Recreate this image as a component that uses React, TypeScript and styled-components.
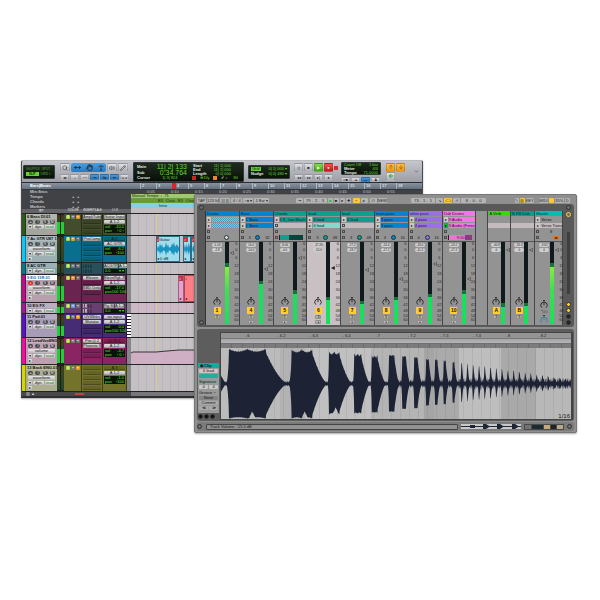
import React from "react";
import styled, { createGlobalStyle, css } from "styled-components";
import { Search, MoveHorizontal, Hand, Type, Volume2, Pencil, ArrowUp, ArrowDown, ArrowLeft, ChevronDown } from "lucide-react";

const Global = createGlobalStyle`
  *, *::before, *::after { box-sizing: border-box; }
  body { margin: 0; background: #fff; font: 4px/5px "Liberation Sans", Arial, sans-serif; color: #161616; }
  button, input { font: inherit; color: inherit; padding: 0; margin: 0; border: 0; }
  i { font-style: normal; }
  svg { display: block; flex: none; }
`;

const Desktop = styled.main`
  position: relative;
  min-height: 100vh;
  overflow: hidden;
`;

/* ---------- Editor window ---------- */

const EditWindow = styled.section`
  position: absolute;
  left: 21px;
  top: 160px;
  width: 67%;
  background: #3b3b3d;
  border: 1px solid #4a4a4c;
  border-top-color: #b9bac0;
  border-bottom: 2px solid #2f2f31;
  border-radius: 2px 2px 0 0;
  overflow: hidden;
  box-shadow: 0 1px 2px rgba(0, 0, 0, 0.35);
`;

const Toolbar = styled.header`
  display: grid;
  grid-template-columns: 37px 73px 115px 46px 47px 45px 28px 1fr;
  align-items: center;
  height: 22px;
  padding-left: 1px;
  background: linear-gradient(#c6c7cd, #9c9ea6);
  border-bottom: 1px solid #2a2c30;
`;

const Lcd = styled.div<{ $h: number; $w: number }>`
  display: flex;
  flex-direction: column;
  justify-content: space-evenly;
  height: ${(p) => p.$h}px;
  width: ${(p) => p.$w}px;
  padding: 0 2px;
  background: linear-gradient(#1d291d, #081208);
  border: 1px solid #35393a;
  border-radius: 1px;
  color: #5fd32c;
  white-space: nowrap;
`;

const LcdLine = styled.div<{ $big?: boolean }>`
  display: flex;
  justify-content: space-between;
  align-items: center;
  font-size: ${(p) => (p.$big ? 7 : 4)}px;
  line-height: ${(p) => (p.$big ? 6 : 4)}px;
  color: #62d82e;
  white-space: nowrap;
  b { color: #e6eee4; font-size: 4px; }
`;

const LcdMode = styled.button<{ $on?: boolean }>`
  width: 13px;
  height: 4px;
  font-size: 3px;
  line-height: 4px;
  font-weight: bold;
  background: ${(p) => (p.$on ? "#63d22d" : "transparent")};
  color: ${(p) => (p.$on ? "#10250a" : "#437b28")};
`;

const Mark = styled.em<{ $on?: boolean }>`
  font-style: normal;
  padding: 0 1px;
  background: ${(p) => (p.$on ? "#63d22d" : "transparent")};
  color: #10250a;
`;

const Counter = styled.div`
  display: grid;
  grid-template-columns: 50px 38px;
  justify-content: start;
  gap: 0 6px;
  width: 111px;
  height: 20px;
  padding: 1px 3px;
  background: linear-gradient(#202b20, #071007);
  border: 1px solid #33373a;
  border-radius: 1px;
`;

const CounterFoot = styled.div`
  grid-column: 1 / -1;
  display: flex;
  gap: 4px;
  align-items: center;
  line-height: 4px;
  color: #62d82e;
  white-space: nowrap;
  b { color: #e6eee4; }
  span:first-of-type { margin: 0 10px 0 8px; }
`;

const Chip = styled.i<{ $c: string }>`
  flex: none;
  width: 4px;
  height: 4px;
  background: ${(p) => p.$c};
`;

const Stack = styled.div`
  display: flex;
  flex-direction: column;
  gap: 2px;
`;

const Tight = styled.div`
  display: flex;
  flex-direction: column;
  gap: 0;
`;

const Row = styled.div<{ $gap?: number }>`
  display: flex;
  align-items: center;
  gap: ${(p) => p.$gap ?? 1}px;
`;

const ToolGroup = styled.div`
  display: flex;
  border-radius: 2px;
  background: linear-gradient(#4a9fe0, #2379c4);
  button { background: transparent; border: 0; }
`;

const toolTone = {
  grey: css`background: linear-gradient(#e0e1e4, #aeafb4); color: #2c2c30;`,
  blue: css`background: linear-gradient(#4c9cdb, #2272b8); color: #0c2034;`,
  green: css`background: linear-gradient(#86dc4e, #3da01a); color: #e7ffd8;`,
  red: css`background: linear-gradient(#f05656, #c81616); color: #fff;`,
  orange: css`background: linear-gradient(#ffc04a, #ef940c); color: #7a4300;`,
};

const Tool = styled.button<{ $tone?: keyof typeof toolTone; $w?: number; $h?: number }>`
  display: flex;
  align-items: center;
  justify-content: center;
  width: ${(p) => p.$w ?? 9}px;
  height: ${(p) => p.$h ?? 9}px;
  border: 1px solid rgba(60, 62, 68, 0.25);
  border-radius: 1px;
  ${(p) => toolTone[p.$tone ?? "grey"]}
`;

const Ruler = styled.div<{ $main?: boolean }>`
  display: grid;
  grid-template-columns: 109px minmax(0, 1fr);
  height: ${(p) => (p.$main ? 7 : 4)}px;
  line-height: ${(p) => (p.$main ? 6 : 4)}px;
  background: ${(p) => (p.$main ? "linear-gradient(#8893a1, #66707d)" : "#414245")};
  color: ${(p) => (p.$main ? "#fff" : "#c2c4c6")};
  border-bottom: ${(p) => (p.$main ? 1 : 0)}px solid #30363d;
`;

const RulerName = styled.b`
  padding-left: 8px;
`;

const Ticks = styled.div`
  display: grid;
  grid-template-columns: repeat(17, 16px);
  overflow: hidden;
  padding-left: 9px;
`;

const Tick = styled.span<{ $head?: boolean }>`
  border-left: ${(p) => (p.$head ? "4px solid #d8262c" : "1px solid rgba(220, 225, 230, 0.55)")};
  padding-left: 1px;
`;

const SubTicks = styled.div`
  display: grid;
  grid-template-columns: repeat(12, 24px);
  padding-left: 16px;
  overflow: hidden;
`;

const Conductor = styled.div`
  display: grid;
  grid-template-columns: 109px minmax(0, 1fr);
  height: 14px;
`;

const ConductorNames = styled.div`
  display: grid;
  grid-template-columns: 42px 5px 1fr;
  grid-auto-rows: 5px;
  padding-left: 8px;
  color: #c2c4c6;
  font-weight: bold;
  background: #414245;
`;

const Lane = styled.div<{ $c: string; $indent: number; $h: number }>`
  display: flex;
  gap: 3px;
  height: ${(p) => p.$h}px;
  line-height: ${(p) => p.$h}px;
  padding-left: ${(p) => p.$indent}px;
  background: ${(p) => p.$c};
  color: #1c2a12;
  white-space: nowrap;
  overflow: hidden;
`;

const trackGrid = css`
  display: grid;
  grid-template-columns: 4px 31px 7px 18px 21px 24px 4px minmax(0, 1fr);
`;

const ColumnHeads = styled.div`
  ${trackGrid}
  height: 5px;
  line-height: 5px;
  font-size: 3px;
  background: #626468;
  color: #f0f0f0;
  white-space: nowrap;
  text-align: center;
  span:nth-child(8) { background: #c1bdc0; }
`;

const TrackRow = styled.div<{ $h: number; $bg: string }>`
  ${trackGrid}
  height: ${(p) => p.$h}px;
  background: ${(p) => p.$bg};
  border-top: 1px solid #252527;
  overflow: hidden;
`;

const Strip = styled.i<{ $c: string }>`
  background: ${(p) => p.$c};
  border-right: 1px solid rgba(0, 0, 0, 0.35);
`;

const NamePanel = styled.div<{ $tint: string }>`
  display: flex;
  flex-direction: column;
  gap: 1px;
  min-width: 0;
  background: ${(p) => p.$tint};
`;

const TrackName = styled.div<{ $on?: boolean }>`
  padding-left: 1px;
  flex: none;
  height: 5px;
  font-weight: bold;
  white-space: nowrap;
  background: ${(p) => (p.$on ? "#fff" : "rgba(255,255,255,0.18)")};
  color: ${(p) => (p.$on ? "#1263b5" : "#111")};
`;

const Dots = styled.div`
  display: flex;
  justify-content: space-evenly;
  flex: none;
`;

const DotButton = styled.button<{ $rec?: boolean }>`
  width: 5px;
  height: 4px;
  font-size: 3px;
  line-height: 4px;
  border-radius: 2px;
  background: ${(p) => (p.$rec ? "#e02222" : "#47494d")};
  color: #fff;
`;

const Selector = styled.button<{ $wide?: boolean; $green?: boolean }>`
  flex: ${(p) => (p.$wide ? "1" : "none")};
  min-width: 4px;
  height: 4px;
  line-height: 4px;
  border-radius: 1px;
  background: linear-gradient(#e8e8e8, #b9b9b9);
  color: ${(p) => (p.$green ? "#15872a" : "#151515")};
  white-space: nowrap;
`;

const SelectorRow = styled.div`
  display: flex;
  flex: none;
  gap: 1px;
  padding: 0 2px;
`;

const StereoMeter = styled.div<{ $l: number }>`
  display: flex;
  gap: 1px;
  padding: 1px 0;
  background: #1c1d1a;
  &::before, &::after {
    content: "";
    flex: 1;
    background: linear-gradient(to top, #1fd034 ${(p) => p.$l}%, #234529 ${(p) => p.$l}%, #3b431f 80%, #4a3020);
  }
`;

const Comments = styled.div`
  display: flex;
  gap: 1px;
  padding: 1px 1px 0 2px;
  border-right: 1px solid rgba(0, 0, 0, 0.45);
`;

const Flag = styled.button<{ $c: string }>`
  width: 4px;
  height: 4px;
  line-height: 4px;
  border-radius: 1px;
  background: ${(p) => p.$c};
  color: #fff;
  font-weight: bold;
`;

const SlotColumn = styled.div`
  display: flex;
  flex-direction: column;
  gap: 1px;
  min-width: 0;
  padding: 1px;
  border-right: 1px solid rgba(0, 0, 0, 0.45);
`;

const Slot = styled.button<{ $on?: boolean }>`
  flex: none;
  height: 4px;
  line-height: 4px;
  border-radius: 1px;
  white-space: nowrap;
  background: ${(p) => (p.$on ? "linear-gradient(#dedede, #b5b5b5)" : "rgba(0,0,0,0.13)")};
  box-shadow: inset 0 -1px ${(p) => (p.$on ? "rgba(0,0,0,0.15)" : "rgba(0,0,0,0.25)")};
`;

const Readout = styled.output<{ $short?: boolean }>`
  display: flex;
  flex-direction: column;
  justify-content: center;
  height: ${(p) => (p.$short ? 4 : 8)}px;
  padding: 0 1px;
  background: #091306;
  color: #64e038;
  line-height: 4px;
  white-space: nowrap;
  span { display: flex; justify-content: space-between; }
`;

const Gutter = styled.i<{ $keys?: boolean }>`
  background: ${(p) => (p.$keys ? "repeating-linear-gradient(#fff 0 2px, #222 2px 3px)" : "#85868a")};
`;

const Timeline = styled.div<{ $pink?: boolean }>`
  display: flex;
  overflow: hidden;
  background:
    linear-gradient(90deg, transparent 25px, #dcc98a 25px 26px, transparent 26px),
    repeating-linear-gradient(90deg, transparent 0 7px, rgba(90, 80, 90, 0.1) 7px 8px),
    ${(p) => (p.$pink ? "#cdb8c6" : "#c4c0c3")};
`;

const AudioClip = styled.div<{ $c: string; $edge: string; $before: number; $w: number }>`
  margin-left: ${(p) => p.$before}px;
  width: ${(p) => p.$w}px;
  flex: none;
  display: flex;
  flex-direction: column;
  justify-content: space-between;
  background: ${(p) => p.$c};
  border: 1px solid ${(p) => p.$edge};
  overflow: hidden;
  white-space: nowrap;
  b { width: 4px; background: #c93240; color: #fff; }
`;

const EditFooter = styled.footer`
  ${trackGrid}
  height: 5px;
  line-height: 4px;
  background: linear-gradient(90deg, transparent 109px, #77777b 109px), #48484b;
  border-top: 1px solid #222;
  color: #ddd;
  i { width: 9px; height: 2px; margin: 1px 0 0 11px; background: #c3423c; }
`;

type Track = {
  name: string; h: number; strip: string; bg: string; tint: string; level: number;
  view?: string; selected?: boolean; rec?: boolean; inserts: string[]; io: string[]; vol: string; pan: string; short?: boolean;
};

const tracks: Track[] = [
  { name: "6   Bass DI.01", h: 22, strip: "#2f5a1e", bg: "#434c2c", tint: "#a3a69c", level: 62, inserts: ["AmpliTube", "", "", ""], io: ["Guitar Input", "A 1-2"], vol: "-10.0", pan: "‹ 0 ›" },
  { name: "7 Ac GTR U87 1", h: 27, strip: "#12c4f2", bg: "#08708c", tint: "#9fb0b4", level: 0, view: "waveform", inserts: ["ProComp", "", "", "", ""], io: ["A 2", "AC GTR"], vol: "-6.2", pan: "‹100" },
  { name: "8     AC GTR", h: 12, strip: "#0b7686", bg: "#28505b", tint: "#87a0a5", level: 0, inserts: [], io: ["ACGTR", "A 1-2"], vol: "0.0", pan: "", short: true },
  { name: "9   EG 11R.01", h: 28, strip: "#b8108d", bg: "#6a2450", tint: "#b79fae", level: 62, view: "waveform", selected: true, rec: true, inserts: ["Eleven", "", "BBD Delay", ""], io: ["ElevnRgL-R", "A 1-2"], vol: "-17.0", pan: "100 100" },
  { name: "10    EG FX", h: 11, strip: "#a01b96", bg: "#68406f", tint: "#ad9fb4", level: 62, inserts: [], io: ["Rg St", "A 1-2"], vol: "0.0", pan: "", short: true },
  { name: "11    Pad.01", h: 24, strip: "#5a14bd", bg: "#452c74", tint: "#a79cb8", level: 50, inserts: ["UVIWrks", "Mutator", "", ""], io: ["no input", "A 1-2"], vol: "0.0", pan: "100 100" },
  { name: "12 LeadVoxENG", h: 27, strip: "#f00d9f", bg: "#8a2462", tint: "#bd9fb1", level: 57, view: "volume", inserts: ["Pro-Q 2", "Phoenix II", "", ""], io: ["U 78.1", "A 1-2"], vol: "-4.7", pan: "‹ 0 ›" },
  { name: "13 Back ENG.01", h: 27, strip: "#d2d40e", bg: "#74732b", tint: "#aeae90", level: 0, view: "waveform", inserts: ["", "", "", "", ""], io: ["A 3", "A 1-2"], vol: "-1.0", pan: "‹100" },
];

const MiniWave = () => (
  <svg viewBox="0 0 22 12" width="100%" height="14" preserveAspectRatio="none" aria-hidden="true">
    <path d="M0 6 1 3 2 5 3 1 4 4 5 2 6 5 8 4 9 0 10 4 11 2 12 5 14 4 15 1 16 3 17 0 18 4 20 2 22 5V7L20 10 18 8 17 12 16 9 15 11 14 8 12 7 11 10 10 8 9 12 8 8 6 7 5 10 4 8 3 11 2 7 1 9Z" fill="#1795c0" />
  </svg>
);

function TrackLane({ index }: { index: number }) {
  if (index === 1)
    return (
      <Timeline>
        <AudioClip $c="#a2dcec" $edge="#2b6d86" $before={25} $w={24}><span><b>♪</b>Guitar</span><MiniWave /><span>◂ 0 dB</span></AudioClip>
        <AudioClip $c="#a2dcec" $edge="#2b6d86" $before={3} $w={8}><b>♪</b><MiniWave /><span>◂</span></AudioClip>
        <AudioClip $c="#a2dcec" $edge="#2b6d86" $before={0} $w={30}><b>♪</b><MiniWave /><span>◂</span></AudioClip>
      </Timeline>
    );
  if (index === 3)
    return (
      <Timeline>
        <AudioClip $c="#e3a3cb" $edge="#a35b88" $before={47} $w={6}><b>♪</b><span>◂</span></AudioClip>
        <AudioClip $c="#fb7f86" $edge="#b0454e" $before={0} $w={40}><span>♪</span><span>◂</span></AudioClip>
      </Timeline>
    );
  if (index === 6)
    return (
      <Timeline>
        <svg viewBox="0 0 64 26" width="64" height="26" aria-label="Volume automation">
          <path d="M0 15 2 14 25 14 36 13 48 12H64V26H0Z" fill="#cfafc4" />
          <path d="M0 15 2 14 25 14 36 13 48 12H64" fill="none" stroke="#3a3438" />
        </svg>
      </Timeline>
    );
  return <Timeline $pink={index === 4} />;
}

function EditTrack({ t, index }: { t: Track; index: number }) {
  return (
    <TrackRow $h={t.h} $bg={t.bg}>
      <Strip $c={t.strip} />
      <NamePanel $tint={t.tint}>
        <TrackName $on={t.selected}>{t.name}</TrackName>
        {!t.short && <Dots>{["●", "I", "S", "M"].map((d, i) => <DotButton key={d} $rec={t.rec && i === 0} aria-label={`${t.name} ${d}`}>{d}</DotButton>)}</Dots>}
        {t.view && <SelectorRow><Selector $wide>{t.view}</Selector></SelectorRow>}
        <SelectorRow><Selector>▾</Selector><Selector $wide>dyn</Selector><Selector $wide $green>read</Selector></SelectorRow>
        {t.h > 25 && <SelectorRow><Selector>▸</Selector></SelectorRow>}
      </NamePanel>
      <StereoMeter $l={t.level} />
      <Comments>
        <Flag $c="#a4d944">I</Flag>
        <Flag $c={index === 4 ? "#6f9be0" : index === 1 || index === 3 ? "#e09a35" : "#77797d"}>•</Flag>
        <Flag $c={index === 5 || index === 7 || index === 0 ? "#eb9a27" : "#6e7074"}>•</Flag>
      </Comments>
      <SlotColumn>
        {t.short
          ? [0, 1].map((r) => <Row key={r}>{[0, 1, 2, 3].map((c) => <Slot key={c} $on={index === 4 && c < 2}>▫</Slot>)}</Row>)
          : t.inserts.map((n, i) => <Slot key={i} $on={!!n}>{n}</Slot>)}
      </SlotColumn>
      <SlotColumn>
        {t.short ? <Row>{t.io.map((n) => <Slot key={n} $on>{n}</Slot>)}</Row> : t.io.map((n, i) => <Slot key={i} $on={!(i === 0 && (index === 1 || index > 5))}>{n}</Slot>)}
        <Readout $short={t.short}>
          <span>{!t.short && <i>vol</i>}<i>{t.vol}</i>{t.short && <i>▾ ▾</i>}</span>
          {!t.short && <span>pan<i>{t.pan}</i></span>}
        </Readout>
      </SlotColumn>
      <Gutter $keys={index === 5} />
      <TrackLane index={index} />
    </TrackRow>
  );
}

function Editor() {
  return (
    <EditWindow aria-label="Audio editor">
      <Toolbar>
        <Lcd $h={14} $w={32}>
          <Row><LcdMode>SHUFFLE</LcdMode><LcdMode>SPOT</LcdMode></Row>
          <Row><LcdMode $on>SLIP</LcdMode><LcdMode>GRID ▾</LcdMode></Row>
        </Lcd>
        <Stack>
          <Row>
            <Tool aria-label="Zoom" $w={10}><Search size={6} /></Tool>
            <ToolGroup>
              <Tool aria-label="Trim" $w={12}><MoveHorizontal size={7} strokeWidth={3} /></Tool>
              <Tool aria-label="Select" $w={12}><Hand size={7} strokeWidth={3} /></Tool>
              <Tool aria-label="Grab" $w={11}><Type size={6} strokeWidth={3} /></Tool>
            </ToolGroup>
            <Tool aria-label="Scrub" $w={10}><Volume2 size={6} /></Tool>
            <Tool aria-label="Pencil" $w={10}><Pencil size={6} /></Tool>
          </Row>
          <Row>{["◂▸", "→", "⋯", "⇥", "↹", "⇤", "a-z"].map((x, i) => <Tool key={x} $h={6} $tone={i > 2 && i < 6 ? "blue" : "grey"}>{x}</Tool>)}</Row>
        </Stack>
        <Counter>
          <Tight>
            <LcdLine $big><b>Main</b><span>11| 2| 133</span></LcdLine>
            <LcdLine $big><b>Sub</b><span>0:34.764</span></LcdLine>
          </Tight>
          <Tight>
            <LcdLine><b>Start</b>11| 1| 000</LcdLine>
            <LcdLine><b>End</b>11| 1| 000</LcdLine>
            <LcdLine><b>Length</b>0| 0| 000</LcdLine>
          </Tight>
          <CounterFoot><b>Cursor</b><span>1| 3| 824</span><Chip $c="#c02b1d" /><span>⊕ Dly</span><Chip $c="#f08426" /><b>✓ ♩</b><span>80</span></CounterFoot>
        </Counter>
        <Lcd $h={14} $w={42}>
          <LcdLine><Mark $on>Grid</Mark>0| 1| 000 ▾</LcdLine>
          <LcdLine><b>Nudge</b>0| 0| 480 ▾</LcdLine>
        </Lcd>
        <Stack>
          <Row><Tool aria-label="Online">◎</Tool><Tool aria-label="Stop">■</Tool><Tool aria-label="Play" $tone="green">▶</Tool><Tool aria-label="Record" $tone="red">●</Tool><Chip $c="#d92c2c" /></Row>
          <Row>{["◂◂", "▸▸", "▸|", "●"].map((x) => <Tool key={x} $h={6}>{x}</Tool>)}</Row>
        </Stack>
        <Stack>
          <Lcd $h={13} $w={40}>
            <LcdLine><span>Count Off</span>1 bar</LcdLine>
            <LcdLine><b>Meter</b>4/4</LcdLine>
            <LcdLine><b>Tempo</b>71.0000</LcdLine>
          </Lcd>
          <Row>{["ıı■", "▴", "↔", "♟"].map((x, i) => <Tool key={x} $h={5} $tone={i === 2 ? "blue" : "grey"}>{x}</Tool>)}</Row>
        </Stack>
        <Tight>
          <Row><Tool $tone="orange" aria-label="Up"><ArrowUp size={6} /></Tool><Tool $tone="orange" aria-label="Down"><ArrowDown size={6} /></Tool></Row>
          <Tool aria-label="Back"><ArrowLeft size={6} strokeWidth={4} color="#20a443" /></Tool>
        </Tight>
        <ChevronDown size={5} />
      </Toolbar>
      <Ruler $main>
        <RulerName>Bars|Beats</RulerName>
        <Ticks>{Array.from({ length: 17 }, (_, i) => <Tick key={i} $head={i === 2}>{i + 2}</Tick>)}</Ticks>
      </Ruler>
      <Ruler>
        <RulerName>Min:Secs</RulerName>
        <SubTicks>{Array.from({ length: 11 }, (_, i) => <span key={i}>{`0:${String(i * 5 + 5).padStart(2, "0")}`}</span>)}</SubTicks>
      </Ruler>
      <Conductor>
        <ConductorNames>
          <span>Tempo</span><span>+</span><span>+</span>
          <span>Chords</span><span>+</span><span>+</span>
          <span>Markers</span><span>+</span><span>+</span>
        </ConductorNames>
        <div>
          <Lane $c="#9fca6c" $indent={1} $h={4}>Manual Tempo: ♩71</Lane>
          <Lane $c="#6b9a3a" $indent={27} $h={5}><span>E5</span><span>Csus</span><span>E5</span><span>Csus</span></Lane>
          <Lane $c="#86cfe4" $indent={28} $h={5}>Intro</Lane>
        </div>
      </Conductor>
      <ColumnHeads><span /><span>▥ ▾</span><span /><span>COLOR</span><span>INSERTS A-E</span><span>I / O</span><span /><span /></ColumnHeads>
      {tracks.map((t, i) => <EditTrack key={t.name} t={t} index={i} />)}
      <EditFooter><span /><span>▥ ▲</span><span /><i /></EditFooter>
    </EditWindow>
  );
}

/* ---------- Session window ---------- */

const LiveWindow = styled.section`
  position: absolute;
  left: 194px;
  top: 194px;
  right: 23px;
  padding: 1px 2px;
  background: #8f8f8f;
  border: 1px solid #777;
  border-radius: 2px;
  box-shadow: 0 1px 2px rgba(0, 0, 0, 0.35);
`;

const ControlBar = styled.header`
  display: grid;
  grid-template-columns: 98fr 115fr 103fr 24fr 35fr;
  align-items: center;
  height: 8px;
`;

const Key = styled.button<{ $on?: boolean; $w?: number; $green?: boolean }>`
  flex: none;
  min-width: ${(p) => p.$w ?? 7}px;
  height: 5px;
  line-height: 5px;
  background: ${(p) => (p.$on ? "#ffc928" : "#b4b4b4")};
  color: ${(p) => (p.$green ? "#14c544" : "#262626")};
  border-radius: 1px;
  white-space: nowrap;
`;

const SessionArea = styled.div`
  display: grid;
  grid-template-columns: 8px minmax(0, 1fr) 11px;
  padding: 0 0 2px;
  background: #595959;
  border-radius: 3px;
`;

const SideRail = styled.div`
  display: flex;
  flex-direction: column;
  align-items: center;
  justify-content: space-between;
  padding-top: 1px;
`;

const Ring = styled.button<{ $c?: string; $fill?: string }>`
  flex: none;
  width: 5px;
  height: 5px;
  border: 1px solid ${(p) => p.$c ?? "#333"};
  border-radius: 50%;
  background: ${(p) => p.$fill ?? "#6c6c6c"};
`;

const ScrollTrack = styled.i`
  width: 3px;
  flex: 1;
  margin: 15px 0 8px;
  background: #3f3f3f;
`;

const Rings = styled.div`
  display: flex;
  flex-direction: column;
  gap: 1px;
`;

const Channels = styled.div`
  display: grid;
  grid-template-columns: repeat(8, 34fr) 12fr 23fr 24fr 28fr;
  margin-top: 7px;
  background: #3d3d3d;
  border-left: 1px solid #333;
`;

const Channel = styled.div<{ $sel?: boolean }>`
  display: flex;
  flex-direction: column;
  min-width: 0;
  background: ${(p) => (p.$sel ? "linear-gradient(#939393 30px, #c9c0c3 30px)" : "#939393")};
  border-right: 1px solid #454545;
`;

const ChannelTitle = styled.div<{ $c: string }>`
  height: 5px;
  padding-left: 1px;
  background: ${(p) => p.$c};
  color: #0d2633;
  white-space: nowrap;
`;

const ClipRow = styled.div<{ $light?: boolean }>`
  display: flex;
  align-items: center;
  gap: 1px;
  height: 5px;
  margin-top: 1px;
  padding-left: 1px;
  background: ${(p) => (p.$light ? "#c4bbbe" : "transparent")};
`;

const Launch = styled.button<{ $on?: boolean }>`
  flex: none;
  width: 4px;
  height: 5px;
  line-height: 5px;
  background: ${(p) => (p.$on ? "#12b536" : "#c9c9c9")};
`;

const StopMark = styled.i`
  flex: none;
  width: 3px;
  height: 3px;
  border: 1px solid #4c4c4c;
`;

const ClipName = styled.button<{ $c: string; $check?: boolean; $center?: boolean }>`
  flex: 1;
  min-width: 0;
  height: 5px;
  text-align: ${(p) => (p.$center ? "center" : "left")};
  white-space: nowrap;
  background: ${(p) => (p.$check ? "repeating-conic-gradient(#3fa3c8 0 25%, #83c4dc 0 50%) 0 0 / 2px 2px" : p.$c)};
`;

const StatusRow = styled.div`
  display: flex;
  align-items: center;
  justify-content: space-between;
  height: 5px;
  margin-top: 1px;
  padding: 0 3px 0 1px;
  color: #222;
`;

const Pie = styled.i<{ $c: string }>`
  width: 5px;
  height: 5px;
  border-radius: 50%;
  border: 1px solid #24363c;
  background: ${(p) => p.$c};
`;

const OrangeKey = styled.button`
  width: 6px;
  height: 4px;
  line-height: 4px;
  background: #ee7316;
`;

const Progress = styled.div<{ $c: string; $d: string }>`
  flex: 1;
  height: 5px;
  margin-left: 1px;
  text-align: center;
  background: linear-gradient(90deg, ${(p) => p.$c} ${(p) => (p.$c === "#10a18d" ? 40 : 70)}%, ${(p) => p.$d} 0);
  border: 0 solid #222;
  border-width: 0 0 0 1px;
`;

const Mixer = styled.div<{ $left: number }>`
  display: grid;
  grid-template-columns: ${(p) => p.$left}px 4px 5px minmax(0, 1fr);
  height: 84px;
  margin-top: 1px;
  padding-bottom: 1px;
  border-top: 1px solid #555;
`;

const Controls = styled.div`
  display: flex;
  flex-direction: column;
  align-items: center;
  gap: 1px;
  padding: 1px 1px 0 4px;
`;

const ValueBox = styled.output`
  min-width: 10px;
  height: 4px;
  font-size: 3px;
  line-height: 4px;
  border-radius: 2px;
  background: #cfcfcf;
  text-align: center;
  white-space: nowrap;
`;

const Spacer = styled.i`
  flex: 1;
`;

const ArmGap = styled.i`
  flex: none;
  height: 4px;
`;

const NumberButton = styled.button`
  flex: none;
  width: 7px;
  height: 7px;
  line-height: 7px;
  font-size: 5px;
  font-weight: bold;
  background: #ffcf22;
`;

const SmallButton = styled.button<{ $w?: number }>`
  flex: none;
  width: ${(p) => p.$w ?? 6}px;
  height: 4px;
  line-height: 4px;
  font-size: 3px;
  background: #b7b7b7;
  border-radius: 1px;
  box-shadow: inset 0 0 0 1px rgba(70, 70, 70, 0.35);
`;

const LevelMeter = styled.div<{ $v: number; $bright?: boolean }>`
  background: linear-gradient(to top,
    #19df5e 0,
    ${(p) => (p.$bright ? "#3ee050" : "#19df5e")} ${(p) => p.$v * 0.6}%,
    ${(p) => (p.$bright ? "#86f03c" : "#19df5e")} ${(p) => p.$v}%,
    #16733a ${(p) => p.$v}%, #16733a ${(p) => p.$v + 4}%,
    #10191c ${(p) => p.$v + 4}%);
`;

const FaderArrow = styled.div<{ $p: number }>`
  padding: ${(p) => p.$p}px 0 0 1px;
`;

const Scale = styled.div`
  display: grid;
  grid-template-rows: 6px 8px 8px 8px 8px 8px 8px 7px 6px 5px 4px 4px;
  line-height: 4px;
  text-align: center;
  color: #2d2d2d;
`;

const Knob = ({ blue }: { blue?: boolean }) => (
  <svg viewBox="0 0 10 11" width="8" height="9" aria-hidden="true">
    <path d="M3.5 0h3L5 1.8Z" fill="#222" />
    <path d="M2.4 9.4A4 4 0 1 1 7.6 9.4M5 2.5V6.5" fill="none" stroke={blue ? "#287fa3" : "#202020"} strokeWidth="1.1" />
  </svg>
);

type Chan = {
  title: string; c: string; clips: [string, string]; clipC: string; num: string; level: number; fader: number;
  kind?: "return" | "master"; sel?: boolean; check?: boolean; pos?: [string, string]; vals: [string, string]; progress?: [string, string, string];
};

const blue = "#0784d0";
const teal = "#0ea08c";
const channels: Chan[] = [
  { title: "Drums", c: blue, clips: [" ", " "], clipC: blue, num: "1", level: 70, fader: 9, check: true, pos: ["", ""], vals: ["-5.16", "-2.8"] },
  { title: "Bass", c: blue, clips: ["1 Bass", "1 Bass"], clipC: blue, num: "4", level: 49, fader: 25, pos: ["3", "32"], vals: ["-16.0", "-14.0"] },
  { title: "Chords", c: teal, clips: ["6 8_Jaw Mach", ""], clipC: teal, num: "5", level: 37, fader: 14, vals: ["-8.00", "-4.0"], progress: ["#10a18d", "#06443e", ""] },
  { title: "lead", c: teal, clips: ["6 lead", "6 lead"], clipC: teal, num: "6", level: 29, fader: 24, sel: true, pos: ["3", "48"], vals: ["-27.26", "-15.0"] },
  { title: "lead", c: teal, clips: ["6 lead", ""], clipC: teal, num: "7", level: 24, fader: 26, pos: ["3", "48"], vals: ["-27.2", "-18.7"] },
  { title: "main pass", c: blue, clips: ["3 pass", "3 pass"], clipC: blue, num: "8", level: 29, fader: 35, pos: ["4", "16"], vals: ["-24.4", "-27.2"] },
  { title: "other pass", c: "#9a70e8", clips: ["4 pass", "4 pass"], clipC: "#9a70e8", num: "9", level: 33, fader: 20, pos: ["4", "16"], vals: ["-23.0", "-11.2"] },
  { title: "Dub Drums", c: "#fb72ea", clips: ["9 Audio", "9 Audio (Freez"], clipC: "#fb72ea", num: "10", level: 37, fader: 35, vals: ["-23.2", "-27.2"], progress: ["#ed72df", "#8a3c82", "9:10"] },
];
const sends: Chan[] = [
  { title: "A Verb", c: "#39d80c", clips: ["", ""], clipC: "", num: "A", level: 21, fader: 6, kind: "return", vals: ["-40.9", "0"] },
  { title: "B FB Dub", c: "#0e9c8c", clips: ["", ""], clipC: "", num: "B", level: 22, fader: 6, kind: "return", vals: ["-35.3", "0"] },
  { title: "Master", c: "#08bcb0", clips: ["Verse", "Verse Trans"], clipC: "transparent", num: "", level: 70, fader: 6, kind: "master", vals: ["-3.61", "0"] },
];

function ChannelStrip({ ch }: { ch: Chan }) {
  const ret = ch.kind === "return";
  const master = ch.kind === "master";
  return (
    <Channel $sel={ch.sel}>
      <ChannelTitle $c={ch.c}>{ch.title}</ChannelTitle>
      {ch.clips.map((clip, i) => (
        <ClipRow key={i} $light={i === 1 && (ret || master || !clip)}>
          {clip ? (
            <>
              <Launch $on={i === 1 && ch.num === "10"} aria-label={`Launch ${ch.title} ${i + 1}`}>▸</Launch>
              <ClipName $c={ch.sel && i === 1 ? "#86d8cb" : ch.clipC} $check={ch.check} aria-label={clip.trim() || "Group clip"}>{clip}</ClipName>
            </>
          ) : !ret && <StopMark />}
        </ClipRow>
      ))}
      <ClipRow>{!ret && <StopMark />}{master && <ClipName $c="transparent" $center>8</ClipName>}</ClipRow>
      <StatusRow>
        {!ret && <StopMark />}
        {ch.pos && <><span>{ch.pos[0]}</span><Pie $c={ch.check ? "#ddd" : ch.c} /><span>{ch.pos[1]}</span></>}
        {ch.progress && <Progress $c={ch.progress[0]} $d={ch.progress[1]}>{ch.progress[2]}</Progress>}
        {master && <OrangeKey>◂▸</OrangeKey>}
      </StatusRow>
      <Mixer $left={ret ? 13 : master ? 15 : 19}>
        <Controls>
          <ValueBox>{ch.vals[0]}</ValueBox>
          <ValueBox>{ch.vals[1]}</ValueBox>
          <Spacer />
          <Knob />
          {master ? <><SmallButton $w={8}>Solo</SmallButton><Knob blue /></> : <NumberButton>{ch.num}</NumberButton>}
          {!master && <SmallButton>S</SmallButton>}
          {!master && (ret || ch.num === "1" ? <ArmGap /> : <SmallButton aria-label={`Arm ${ch.title}`}>●</SmallButton>)}
        </Controls>
        <LevelMeter $v={ch.level} $bright={ch.level > 60} />
        <FaderArrow $p={ch.fader}>
          <svg viewBox="0 0 8 8" width="4" height="4" aria-hidden="true"><path d="M7 1V7L1 4Z" fill={ch.sel ? "#111" : "#b5b5b5"} stroke="#222" strokeWidth={1} /></svg>
        </FaderArrow>
        {!ret && <Scale>{[6, 0, 6, 12, 18, 24, 30, 36, 42, 48, 54, 60].map((n, i) => <span key={i}>{n}</span>)}</Scale>}
      </Mixer>
    </Channel>
  );
}

/* Clip detail */

const ClipArea = styled.div`
  display: grid;
  grid-template-columns: 22px minmax(0, 1fr);
  gap: 1px;
  margin-top: 2px;
  padding: 3px 1px 1px 0;
  background: #5d5d5d;
  border-radius: 3px;
`;

const ClipPanel = styled.aside`
  display: flex;
  flex-direction: column;
  justify-content: flex-end;
  padding: 0 0 0 1px;
`;

const ClipCard = styled.div`
  display: flex;
  flex-direction: column;
  gap: 1px;
  padding: 0 1px;
  background: #999;
  height: 50px;
`;

const ClipHead = styled.div`
  margin: 0 -1px;
  padding: 0 2px;
  height: 5px;
  background: #0fae9c;
  font-weight: bold;
`;

const Field = styled.button<{ $c?: string }>`
  flex: 1;
  min-height: 4px;
  max-height: 4px;
  line-height: 4px;
  background: ${(p) => p.$c ?? "#c8c8c8"};
  border-radius: 1px;
  white-space: nowrap;
`;

const ClipToggles = styled.div`
  display: flex;
  gap: 1px;
  padding: 1px 0;
`;

const WavePanel = styled.div`
  border: 1px solid #444;
  border-right-width: 2px;
  background: #a6a6a6;
`;

const BeatRuler = styled.div`
  display: grid;
  grid-template-columns: repeat(10, 34fr);
  height: 6px;
  padding: 0 0 0 24px;
  background: #949494;
  border-bottom: 1px solid #777;
  overflow: hidden;
  color: #222;
`;

const LoopBar = styled.div`
  height: 5px;
  background: linear-gradient(#a5a5a8, #b5b5b9);
  border-bottom: 1px solid #707073;
`;

const WarpBar = styled.div`
  height: 4px;
  background: repeating-linear-gradient(90deg, #7b7b7b 0 10px, #6b6b6b 10px 11px);
`;

const WaveWrap = styled.div`
  position: relative;
  height: 71px;
  background:
    repeating-linear-gradient(90deg, transparent 0 8px, rgba(70, 70, 70, 0.1) 8px 9px),
    linear-gradient(90deg, #bbb 0 17%, #b2b2b2 17% 24%, #c0c0c0 24% 43%, #b4b4b4 43% 58%, #a5a5a5 58% 61%, #aaa 61% 68%, #bebebe 68% 80%, #a9a9a9 80% 90%, #b8b8b8 90%);
`;

const GridLabel = styled.span`
  position: absolute;
  right: 1px;
  bottom: 0;
  font-size: 6px;
  line-height: 6px;
`;

const LiveFooter = styled.footer`
  display: grid;
  grid-template-columns: 6px minmax(0, 1fr) 60px 40px 7px;
  align-items: center;
  gap: 0 3px;
  height: 9px;
  margin-top: 1px;
  background: #7a7a7a;
  border-radius: 2px;
`;

const Message = styled.div`
  height: 6px;
  line-height: 4px;
  padding-left: 3px;
  border: 1px solid #444;
  border-radius: 1px;
  background: #929292;
`;

const Overview = styled.div`
  height: 5px;
  background: #c9c9c9;
`;

const DeviceMap = styled.div`
  display: flex;
  gap: 1px;
  height: 6px;
  padding: 1px;
  background: #4a4a4a;
`;

const Device = styled.i<{ $w: number; $c: string }>`
  flex: ${(p) => p.$w};
  background: ${(p) => p.$c};
`;

/* Hits of the sample: attack start, plateau end, release end, upper and lower amplitude. */
const hits: [number, number, number, number, number][] = [
  [117, 228, 296, 104, 104], [306, 368, 416, 102, 104], [419, 450, 490, 96, 92], [495, 516, 544, 91, 90], [548, 565, 592, 86, 88],
  [600, 616, 632, 86, 84], [640, 651, 664, 83, 76], [676, 686, 700, 80, 74], [712, 720, 731, 74, 66], [739, 746, 756, 73, 64],
  [765, 771, 781, 70, 62], [792, 797, 808, 66, 58],
];
for (let i = 0; i < 19; i++) {
  const x = 818 + i * 17.4;
  const a = 63 - i * 2.6;
  hits.push([x, x + 2, x + 9, a, a * 0.88]);
}

function wavePath() {
  const top: string[] = [];
  const bottom: string[] = [];
  for (let x = 93; x <= 1149; x += 1) {
    const noise = Math.abs(Math.sin(x * 1.73) * Math.cos(x * 0.61));
    let up = x > 810 ? 3 + noise * 16 : x > 600 ? 4 + noise * 10 : 3 + noise * 6;
    let down = up;
    if (x < 104) up = down = 24 * (1 - (x - 93) / 14);
    hits.forEach(([s, p, e, u, d], i) => {
      const rise = i < 2 ? 11 : 6;
      if (x < s - rise || x > e) return;
      const shape = x < s ? ((x - s + rise) / rise) ** 3 * 0.8 : x <= p ? 1 : ((e - x) / (e - p)) ** 1.6 * 0.92;
      const dent = i < 5 && x >= s && x <= p ? noise * 4 + 7 * Math.abs(Math.sin(((x - s) / (p - s)) * Math.PI * 2)) : noise * 6 * shape;
      const far = Math.abs(x - (s + (p - s) * 0.63));
      const notch = i < 3 && far < 9 ? 18 - far * 2 : 0;
      up = Math.max(up, u * shape - dent);
      down = Math.max(down, d * shape - dent / 2 - notch);
    });
    top.push(`${x} ${(192 - up).toFixed(1)}`);
    bottom.unshift(`${x} ${(192 + down).toFixed(1)}`);
  }
  return `M${top.join("L")}L${bottom.join("L")}Z`;
}
const wave = wavePath();

function Live() {
  return (
    <LiveWindow aria-label="Session view">
      <ControlBar>
        <Row><Key $w={9}>TAP</Key><Key $w={12}>123.94</Key><Key $w={10}>||| |||</Key><Key $w={11}>4 / 4</Key><Key $w={10}>○● ▾</Key><Key $w={15}>1 Bar ▾</Key></Row>
        <Row><Key>⇥</Key><Key $w={23}>79 .&nbsp; 2 .&nbsp; 3</Key><Key $w={5} $green>▶</Key><Key $w={5}>■</Key><Key $w={5}>●</Key><Key $w={5}>✚</Key><ArmGap /><Key $on>⌁</Key><Key>▸</Key><ArmGap /><Key>O</Key><Key $w={9}>NEW</Key></Row>
        <Row><Key $w={24}>73 .&nbsp; 1 .&nbsp; 1</Key><Key>↘</Key><Key $on $w={8}>⊂⊃</Key><Key>↗</Key><Key $w={25}>8 .&nbsp; 0 .&nbsp; 0</Key></Row>
        <Row><Key $w={4}>✎</Key><Key $on $w={5}>▥</Key><Key $w={8}>KEY</Key></Row>
        <Row><Key $w={9}>MIDI</Key><Key $on $w={5} aria-label="MIDI in" /><Key $w={9}>35%</Key><Key $w={5}>D</Key></Row>
      </ControlBar>
      <SessionArea>
        <SideRail><Ring aria-label="Show browser" /><Ring aria-label="Show groove pool" /></SideRail>
        <Channels>
          {channels.map((c) => <ChannelStrip key={c.num} ch={c} />)}
          <Channel />
          {sends.map((c) => <ChannelStrip key={c.title} ch={c} />)}
        </Channels>
        <SideRail>
          <Stack><Ring aria-label="Overview" /><Ring $c="#ffd12e" aria-label="Session" /></Stack>
          <ScrollTrack />
          <Rings>
            {["#ffd12e", "#ffd12e", "#222", "#222"].map((c, i) => <Ring key={i} $fill={c} aria-label={`Section ${i + 1}`} />)}
          </Rings>
        </SideRail>
      </SessionArea>
      <ClipArea>
        <ClipPanel>
          <ClipCard>
            <ClipHead>◉ Clip</ClipHead>
            <Field>6 lead</Field>
            <Field $c="#27ab9c" aria-label="Clip colour" />
            <span>Signature</span>
            <Row><Field>4</Field><Field>4</Field></Row>
            <span>Groove ◔</span>
            <Field $c="#858585">None</Field>
            <Field $c="#aaa">Commit</Field>
            <Row><Field $c="#aaa">≪</Field><Field $c="#aaa">≫</Field></Row>
          </ClipCard>
          <ClipToggles><Ring $fill="#111" aria-label="Launch box" /><Ring $fill="#111" aria-label="Sample box" /><Ring $fill="#111" aria-label="Envelope box" /></ClipToggles>
        </ClipPanel>
        <WavePanel>
          <BeatRuler>{["6", "6.2", "6.3", "6.4", "7", "7.2", "7.3", "7.4", "8", "8.2"].map((b) => <span key={b}>. {b}</span>)}</BeatRuler>
          <LoopBar />
          <WarpBar />
          <WaveWrap>
            <svg viewBox="93 86 1056 211" width="100%" height="71" preserveAspectRatio="none" role="img" aria-label="Waveform">
              <path d={wave} fill="#1d2335" />
            </svg>
            <GridLabel>1/16</GridLabel>
          </WaveWrap>
        </WavePanel>
      </ClipArea>
      <LiveFooter>
        <Ring aria-label="Info" />
        <Message>Track Volume: -15.0 dB</Message>
        <Overview>
          <svg viewBox="0 0 60 5" width="60" height="5" aria-hidden="true">
            <path d="M0 2.5H60" stroke="#222a38" strokeWidth="1" />
            <path d="M9 1H14V4H9ZM22 0H25L29 2.5 25 5H22ZM36 0H39L43 2.5 39 5H36ZM51 0H54L58 2.5 54 5H51Z" fill="#1b2534" />
          </svg>
        </Overview>
        <DeviceMap><Device $w={6} $c="#727272" /><Device $w={11} $c="#1b2b34" /><Device $w={6} $c="#c5aa75" /><Device $w={5} $c="#222" /><Device $w={6} $c="#b8a98c" /></DeviceMap>
        <Ring aria-label="Show devices" />
      </LiveFooter>
    </LiveWindow>
  );
}

export default function App() {
  return (
    <>
      <Global />
      <Desktop>
        <Editor />
        <Live />
      </Desktop>
    </>
  );
}
